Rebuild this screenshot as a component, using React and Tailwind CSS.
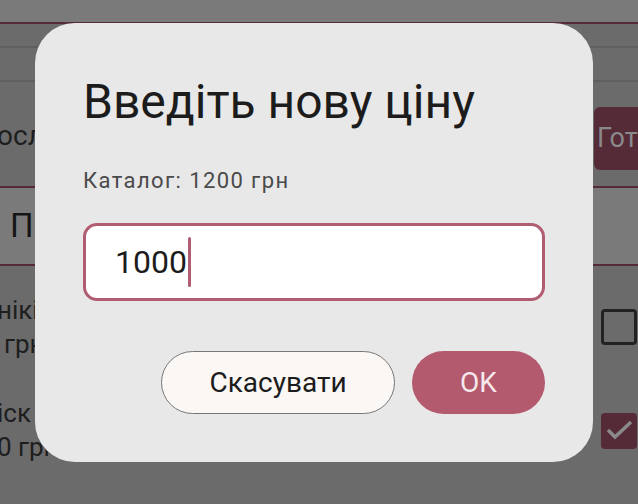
import React from "react";

function Item({ a, b, bShift, checked, badge }) {
  return (
    <div className="h-[103px] flex justify-between items-start pt-[27px]">
      <div className="flex flex-col text-[26px] leading-[34px] text-[#1e1e1e] ml-[-3px]">
        <span>{a}</span>
        <span className={bShift + " flex items-center"}>
          {b}
          {badge && <span className="ml-[14px] mt-[12px] w-[10px] h-[10px] rounded-[2px] bg-[#552b38]" />}
        </span>
      </div>
      {checked ? (
        <div className="mt-[17px] w-[36px] h-[36px] rounded-[4px] bg-[#552b38] flex items-center justify-center">
          <svg width="30" height="24" viewBox="0 0 30 24" fill="none">
            <path d="M4 11 L11 18 L27 3" stroke="#8a8a8a" strokeWidth="3.5" />
          </svg>
        </div>
      ) : (
        <div className="mt-[16px] w-[36px] h-[36px] border-[3.5px] border-[#222] rounded-[4px]" />
      )}
    </div>
  );
}

export default function App() {
  return (
    <div className="relative w-[638px] h-[504px] overflow-hidden bg-[#6b6b6b] font-['Roboto',sans-serif]">
      {/* background page (dimmed) */}
      <div className="flex flex-col">
        <div className="h-[22px] bg-[#7a7a7a]" />
        <div className="h-[2px] bg-[#552b38]" />
        <div className="h-[24px] border-b-2 border-[#5f5f5f]" />
        <div className="h-[34px] border-b-2 border-[#5f5f5f]" />
        <div className="h-[104px] flex items-center justify-between">
          <span className="text-[28px] text-[#1e1e1e] leading-none ml-[-3px] mt-[4px]">осл</span>
          <div className="mt-[9px] h-[63px] w-[90px] mr-[-46px] rounded-l-[6px] bg-[#552b38] flex items-center pl-[3px] text-[27px] text-[#8a8a8a] overflow-hidden whitespace-nowrap">Готово</div>
        </div>
        <div className="h-[2px] bg-[#552b38]" />
        <div className="h-[76px] bg-[#7a7a7a] flex items-center pl-[10px] text-[33px] text-[#151515]">П</div>
        <div className="h-[2px] bg-[#552b38]" />
        <div className="flex flex-col pr-[1px]">
          <Item a="нікі" b="грн" bShift="ml-[7px]" checked={false} />
          <Item a="іск" b="0 грн" bShift="ml-[0px]" checked={true} badge />
        </div>
      </div>

      {/* dialog */}
      <div className="absolute left-[35px] top-[23px] w-[558px] h-[439px] rounded-[40px] bg-[#e8e8e8] px-[48px] pt-[55px] flex flex-col">
        <h1 className="text-[48px] leading-none text-[#1c1c1c] font-normal">Введіть нову ціну</h1>
        <p className="mt-[44px] text-[22px] leading-none tracking-[1.4px] text-[#4a4a4a]">Каталог: 1200 грн</p>
        <div className="mt-[31px] h-[78px] w-[462px] rounded-[14px] border-[3px] border-[#b05d71] bg-white flex items-center pl-[29px]">
          <span className="text-[32px] text-[#1c1c1c] leading-none">1000</span>
          <span className="ml-[1px] w-[3px] h-[50px] rounded-full bg-[#b05d71]" />
        </div>
        <div className="mt-[50px] flex justify-end gap-[17px]">
          <button className="w-[234px] h-[63px] rounded-full border-[1.5px] border-[#777] bg-[#faf7f5] text-[28px] text-[#1c1c1c]">Скасувати</button>
          <button className="w-[133px] h-[63px] rounded-full bg-[#b35a6e] text-[28px] text-[#f7e8ec]">OK</button>
        </div>
      </div>
    </div>
  );
}
